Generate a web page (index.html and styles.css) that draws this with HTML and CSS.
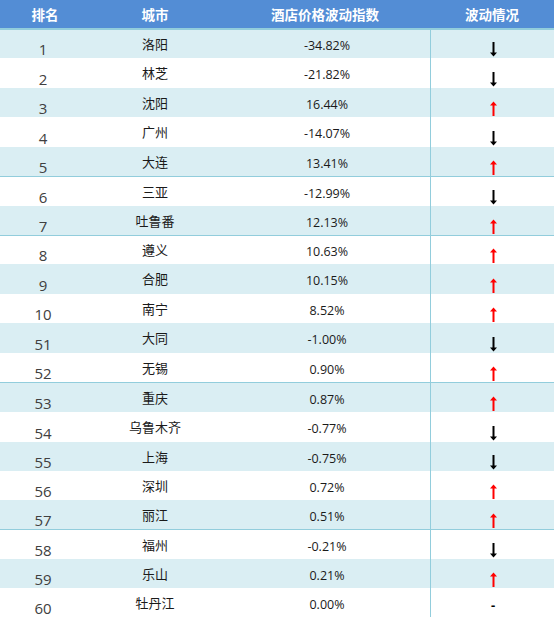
FILE: index.html
```html
<!DOCTYPE html>
<html lang="zh">
<head>
<meta charset="utf-8">
<title>酒店价格波动指数</title>
<link rel="stylesheet" href="styles.css">
</head>
<body>
<div class="table">
  <div class="head">
    <div class="c1">排名</div><div class="c2">城市</div><div class="c3">酒店价格波动指数</div><div class="c4">波动情况</div>
  </div>
  <div class="row s h28"><div class="rank">1</div><div class="city">洛阳</div><div class="val">-34.82%</div><div class="trend"><svg class="dn" viewBox="0 0 9 15"><path d="M4.5 0V13"/><path class="hd" d="M1 10.5L4.5 14.5L8 10.5Z"/></svg></div></div>
  <div class="row h30"><div class="rank">2</div><div class="city">林芝</div><div class="val">-21.82%</div><div class="trend"><svg class="dn" viewBox="0 0 9 15"><path d="M4.5 0V13"/><path class="hd" d="M1 10.5L4.5 14.5L8 10.5Z"/></svg></div></div>
  <div class="row s h29"><div class="rank">3</div><div class="city">沈阳</div><div class="val">16.44%</div><div class="trend"><svg class="up" viewBox="0 0 9 15"><path d="M4.5 2V15"/><path class="hd" d="M1 4.5L4.5 0.5L8 4.5Z"/></svg></div></div>
  <div class="row h30"><div class="rank">4</div><div class="city">广州</div><div class="val">-14.07%</div><div class="trend"><svg class="dn" viewBox="0 0 9 15"><path d="M4.5 0V13"/><path class="hd" d="M1 10.5L4.5 14.5L8 10.5Z"/></svg></div></div>
  <div class="row s h29"><div class="rank">5</div><div class="city">大连</div><div class="val">13.41%</div><div class="trend"><svg class="up" viewBox="0 0 9 15"><path d="M4.5 2V15"/><path class="hd" d="M1 4.5L4.5 0.5L8 4.5Z"/></svg></div></div>
  <div class="row h30 bt"><div class="rank">6</div><div class="city">三亚</div><div class="val">-12.99%</div><div class="trend"><svg class="dn" viewBox="0 0 9 15"><path d="M4.5 0V13"/><path class="hd" d="M1 10.5L4.5 14.5L8 10.5Z"/></svg></div></div>
  <div class="row s h29"><div class="rank">7</div><div class="city">吐鲁番</div><div class="val">12.13%</div><div class="trend"><svg class="up" viewBox="0 0 9 15"><path d="M4.5 2V15"/><path class="hd" d="M1 4.5L4.5 0.5L8 4.5Z"/></svg></div></div>
  <div class="row h29 bt"><div class="rank">8</div><div class="city">遵义</div><div class="val">10.63%</div><div class="trend"><svg class="up" viewBox="0 0 9 15"><path d="M4.5 2V15"/><path class="hd" d="M1 4.5L4.5 0.5L8 4.5Z"/></svg></div></div>
  <div class="row s h30"><div class="rank">9</div><div class="city">合肥</div><div class="val">10.15%</div><div class="trend"><svg class="up" viewBox="0 0 9 15"><path d="M4.5 2V15"/><path class="hd" d="M1 4.5L4.5 0.5L8 4.5Z"/></svg></div></div>
  <div class="row h29"><div class="rank">10</div><div class="city">南宁</div><div class="val">8.52%</div><div class="trend"><svg class="up" viewBox="0 0 9 15"><path d="M4.5 2V15"/><path class="hd" d="M1 4.5L4.5 0.5L8 4.5Z"/></svg></div></div>
  <div class="row s h30"><div class="rank">51</div><div class="city">大同</div><div class="val">-1.00%</div><div class="trend"><svg class="dn" viewBox="0 0 9 15"><path d="M4.5 0V13"/><path class="hd" d="M1 10.5L4.5 14.5L8 10.5Z"/></svg></div></div>
  <div class="row h29"><div class="rank">52</div><div class="city">无锡</div><div class="val">0.90%</div><div class="trend"><svg class="up" viewBox="0 0 9 15"><path d="M4.5 2V15"/><path class="hd" d="M1 4.5L4.5 0.5L8 4.5Z"/></svg></div></div>
  <div class="row s h30 bt"><div class="rank">53</div><div class="city">重庆</div><div class="val">0.87%</div><div class="trend"><svg class="up" viewBox="0 0 9 15"><path d="M4.5 2V15"/><path class="hd" d="M1 4.5L4.5 0.5L8 4.5Z"/></svg></div></div>
  <div class="row h30"><div class="rank">54</div><div class="city">乌鲁木齐</div><div class="val">-0.77%</div><div class="trend"><svg class="dn" viewBox="0 0 9 15"><path d="M4.5 0V13"/><path class="hd" d="M1 10.5L4.5 14.5L8 10.5Z"/></svg></div></div>
  <div class="row s h29"><div class="rank">55</div><div class="city">上海</div><div class="val">-0.75%</div><div class="trend"><svg class="dn" viewBox="0 0 9 15"><path d="M4.5 0V13"/><path class="hd" d="M1 10.5L4.5 14.5L8 10.5Z"/></svg></div></div>
  <div class="row h29"><div class="rank">56</div><div class="city">深圳</div><div class="val">0.72%</div><div class="trend"><svg class="up" viewBox="0 0 9 15"><path d="M4.5 2V15"/><path class="hd" d="M1 4.5L4.5 0.5L8 4.5Z"/></svg></div></div>
  <div class="row s h29"><div class="rank">57</div><div class="city">丽江</div><div class="val">0.51%</div><div class="trend"><svg class="up" viewBox="0 0 9 15"><path d="M4.5 2V15"/><path class="hd" d="M1 4.5L4.5 0.5L8 4.5Z"/></svg></div></div>
  <div class="row h30 bt"><div class="rank">58</div><div class="city">福州</div><div class="val">-0.21%</div><div class="trend"><svg class="dn" viewBox="0 0 9 15"><path d="M4.5 0V13"/><path class="hd" d="M1 10.5L4.5 14.5L8 10.5Z"/></svg></div></div>
  <div class="row s h29"><div class="rank">59</div><div class="city">乐山</div><div class="val">0.21%</div><div class="trend"><svg class="up" viewBox="0 0 9 15"><path d="M4.5 2V15"/><path class="hd" d="M1 4.5L4.5 0.5L8 4.5Z"/></svg></div></div>
  <div class="row h29"><div class="rank">60</div><div class="city">牡丹江</div><div class="val">0.00%</div><div class="trend"><span class="dash">-</span></div></div>
</div>
</body>
</html>
```
FILE: styles.css
```css
html, body {
  margin: 0;
  padding: 0;
  background: #ffffff;
}
.table {
  width: 554px;
  font-family: "Noto Sans CJK SC", "Open Sans", sans-serif;
}
.head, .row {
  display: grid;
  grid-template-columns: 90px 130px 210px 1fr;
  box-sizing: border-box;
}
.head {
  height: 30px;
  background: #538dd5;
  border-bottom: 2px solid #92cddc;
  color: #ffffff;
  font-weight: bold;
  font-size: 13.5px;
  line-height: 28px;
  text-align: center;
}
.head .c1 { padding-left: 0; }
.row.s { background: #daeef3; }
.row.bt { border-top: 1px solid #92cddc; }
.h28 { height: 28px; }
.h29 { height: 29px; }
.h30 { height: 30px; }
.rank {
  font-family: "Open Sans", sans-serif;
  font-size: 15px;
  color: #404040;
  display: flex;
  align-items: flex-end;
  justify-content: center;
  padding-right: 4px;
  line-height: 18px;
  padding-bottom: 0;
}
.city {
  font-size: 13px;
  color: #1a1a1a;
  display: flex;
  align-items: center;
  justify-content: center;
  padding-bottom: 1px;
}
.val {
  font-family: "Open Sans", sans-serif;
  font-size: 12.5px;
  color: #1a1a1a;
  display: flex;
  align-items: center;
  justify-content: center;
  padding-top: 3px;
  padding-left: 4px;
}
.trend {
  border-left: 1px solid #92cddc;
  display: flex;
  align-items: flex-end;
  justify-content: center;
  padding-bottom: 1px;
  padding-left: 1px;
}
.trend svg {
  width: 9px;
  height: 15px;
  display: block;
}
.dn path { stroke: #000000; stroke-width: 2; fill: none; }
.dn path.hd { fill: #000000; stroke: none; }
.up path { stroke: #ff0000; stroke-width: 2; fill: none; }
.up path.hd { fill: #ff0000; stroke: none; }
.dash {
  font-family: "Open Sans", sans-serif;
  font-size: 13px;
  color: #000000;
  font-weight: bold;
  line-height: 18px;
  padding-bottom: 2px;
}
```
